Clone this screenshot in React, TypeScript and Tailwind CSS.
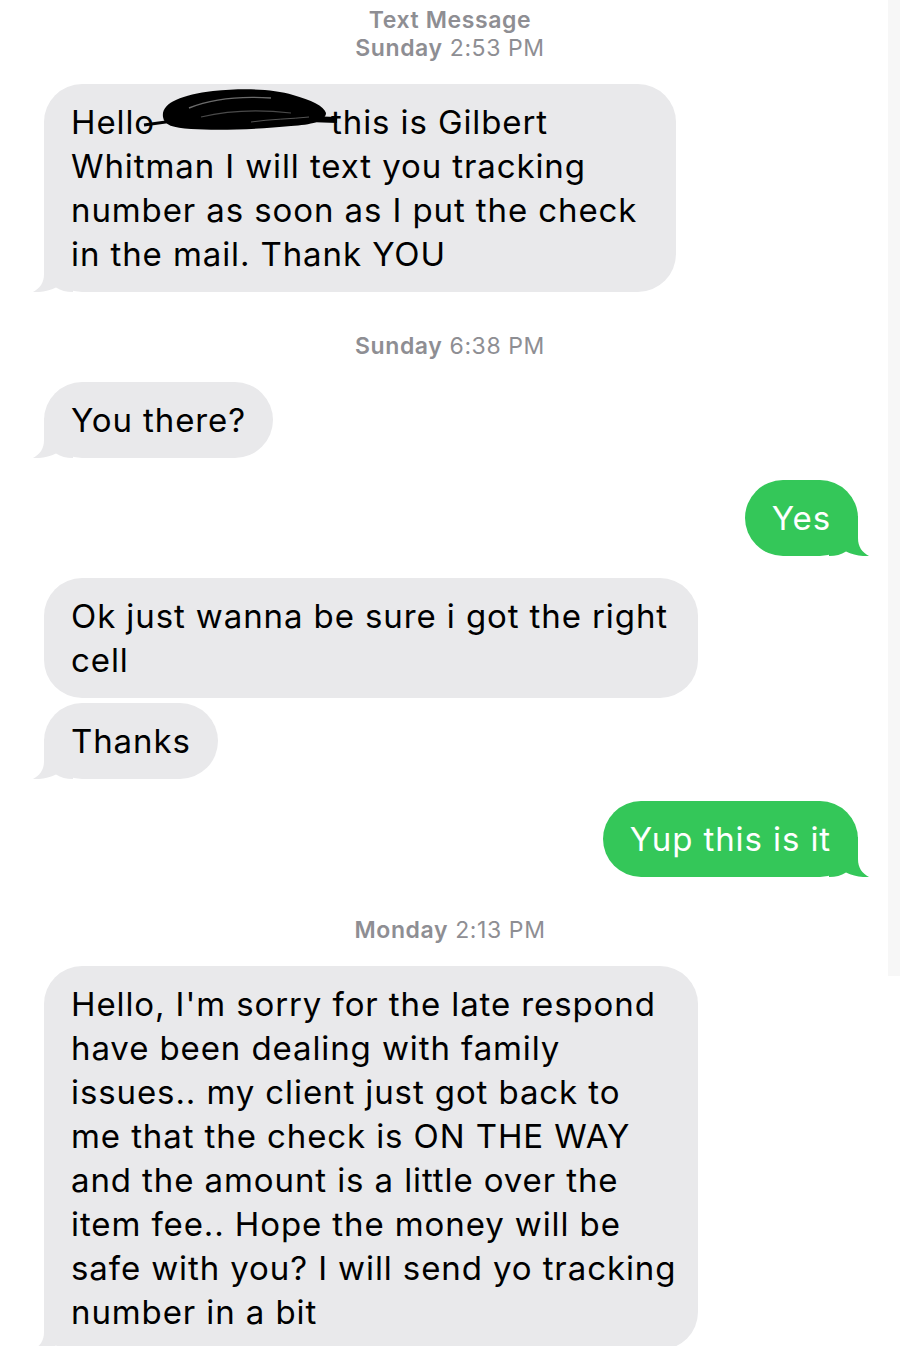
import React from "react";

const FONT = { fontFamily: "Inter, 'Liberation Sans', Arial, sans-serif" };

function Tail({ outgoing }: { outgoing?: boolean }) {
  const fill = outgoing ? "#34c759" : "#e9e9eb";
  return (
    <svg
      width="40"
      height="40"
      viewBox="0 0 40 40"
      className={
        outgoing
          ? "absolute -right-[11px] bottom-0 -scale-x-100"
          : "absolute -left-[11px] bottom-0"
      }
    >
      <path
        d="M11 0 L11 22 C11 31 7 36 0 40 C8 40.5 16 39 23 35.5 C28 38.5 33 40 40 40 L40 0 Z"
        fill={fill}
      />
    </svg>
  );
}

function Bubble({
  outgoing,
  tail,
  width,
  children,
}: {
  outgoing?: boolean;
  tail?: boolean;
  width?: string;
  children: React.ReactNode;
}) {
  return (
    <div
      className={
        "relative rounded-[38px] px-[27px] py-[16px] text-[33px] leading-[44px] tracking-[0.9px] " +
        (outgoing
          ? "self-end mr-[30px] bg-[#34c759] text-white "
          : "self-start ml-[44px] bg-[#e9e9eb] text-black ") +
        (width ?? "w-fit")
      }
    >
      {tail && <Tail outgoing={outgoing} />}
      <div className="relative">{children}</div>
    </div>
  );
}

function Stamp({ day, time }: { day: string; time: string }) {
  return (
    <div className="pl-[12px] text-center text-[23px] leading-[28px] tracking-[0.6px] text-[#8e8e93]">
      <span className="font-semibold">{day}</span> {time}
    </div>
  );
}

function Scribble() {
  return (
    <span className="relative inline-block w-[176px] h-[10px]">
      <svg
        width="200"
        height="48"
        viewBox="0 0 200 48"
        className="absolute -left-[14px] -top-[37px]"
      >
        <path d="M3 38 L32 34" stroke="#000" strokeWidth="3" fill="none" />
        <path
          d="M22 30 C20 16 40 8 72 4 C104 1 132 2 152 8 C170 13 183 19 185 26 C185 34 170 38 150 39 C120 42 80 44 50 42 C32 41 23 38 22 30 Z"
          fill="#000"
        />
        <path d="M168 32 L196 33" stroke="#000" strokeWidth="6" fill="none" />
        <path
          d="M48 21 C70 12 100 9 130 11"
          stroke="#6b6b6b"
          strokeWidth="1.4"
          fill="none"
        />
        <path
          d="M60 30 C85 24 115 22 150 26"
          stroke="#4a4a4a"
          strokeWidth="1.2"
          fill="none"
        />
        <path
          d="M110 35 C130 32 150 32 168 30"
          stroke="#555"
          strokeWidth="1"
          fill="none"
        />
      </svg>
    </span>
  );
}

export default function App() {
  return (
    <div className="flex w-[900px] bg-white overflow-hidden" style={FONT}>
      <div className="flex w-[888px] flex-col pt-[6px]">
        <div className="pl-[12px] text-center text-[23px] leading-[28px] tracking-[0.6px] font-semibold text-[#8e8e93]">
          Text Message
        </div>
        <Stamp day="Sunday" time="2:53 PM" />

        <div className="h-[22px]" />
        <Bubble tail width="w-[632px]">
          <div className="whitespace-nowrap">
            Hello
            <Scribble />
            this is Gilbert
          </div>
          <div className="whitespace-nowrap">Whitman I will text you tracking</div>
          <div className="whitespace-nowrap">number as soon as I put the check</div>
          <div className="whitespace-nowrap">in the mail. Thank YOU</div>
        </Bubble>

        <div className="h-[40px]" />
        <Stamp day="Sunday" time="6:38 PM" />
        <div className="h-[22px]" />

        <Bubble tail>You there?</Bubble>
        <div className="h-[22px]" />
        <Bubble outgoing tail>
          Yes
        </Bubble>
        <div className="h-[22px]" />
        <Bubble width="w-[654px]">
          <div className="whitespace-nowrap">Ok just wanna be sure i got the right</div>
          <div>cell</div>
        </Bubble>
        <div className="h-[5px]" />
        <Bubble tail>Thanks</Bubble>
        <div className="h-[22px]" />
        <Bubble outgoing tail>
          Yup this is it
        </Bubble>

        <div className="h-[39px]" />
        <Stamp day="Monday" time="2:13 PM" />
        <div className="h-[22px]" />

        <Bubble tail width="w-[654px]">
          <div className="whitespace-nowrap">Hello, I'm sorry for the late respond</div>
          <div className="whitespace-nowrap">have been dealing with family</div>
          <div className="whitespace-nowrap">issues.. my client just got back to</div>
          <div className="whitespace-nowrap">me that the check is ON THE WAY</div>
          <div className="whitespace-nowrap">and the amount is a little over the</div>
          <div className="whitespace-nowrap">item fee.. Hope the money will be</div>
          <div className="whitespace-nowrap">safe with you? I will send yo tracking</div>
          <div className="whitespace-nowrap">number in a bit</div>
        </Bubble>
        <div className="h-[40px]" />
      </div>
      <div className="w-[12px] h-[976px] bg-[#f7f7f7]" />
    </div>
  );
}
